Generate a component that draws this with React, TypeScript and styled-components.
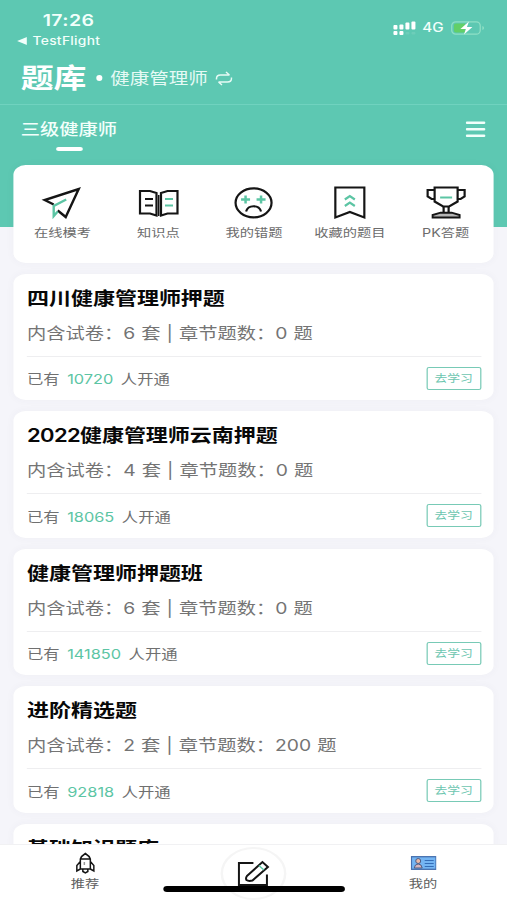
import React from "react";
import styled, { createGlobalStyle } from "styled-components";

const STRETCH = 507 / 416;
const green = "#5dc8b2";
const mint = "#5cc5a4";

const GlobalStyle = createGlobalStyle`
  * { box-sizing: border-box; }
  html, body { margin: 0; padding: 0; overflow: hidden; background: #f5f5fa; }
  body { font-family: Inter, "Noto Sans CJK SC", sans-serif; }
`;

const Frame = styled.div`
  width: 507px;
  height: 900px;
  overflow: hidden;
`;

const Screen = styled.div`
  width: 416px;
  height: 900px;
  display: flex;
  flex-direction: column;
  overflow: hidden;
  white-space: nowrap;
  transform: scaleX(${STRETCH});
  transform-origin: 0 0;
  background: linear-gradient(${green} 0 227px, #f5f5fa 227px);
`;

const StatusBar = styled.header`
  height: 52px;
  padding: 10px 18.5px 0 14px;
  display: flex;
  justify-content: space-between;
  color: #f2fffb;
`;

const Clock = styled.div`
  padding-left: 21px;
  font-size: 16px;
  font-weight: 600;
  line-height: 20px;
  letter-spacing: 0.35px;
`;

const BackLink = styled.div`
  display: flex;
  align-items: center;
  gap: 4.5px;
  padding-top: 1px;
  font-size: 11.3px;
  font-weight: 500;
  line-height: 20px;
  letter-spacing: 0.25px;
`;

const Signals = styled.div`
  height: 35px;
  display: flex;
  align-items: center;
  font-size: 12.5px;
  font-weight: 500;
`;

const Network = styled.span`
  margin: 0 5.5px 0 5px;
`;

const TitleBar = styled.div`
  height: 53px;
  padding: 0 17px;
  display: flex;
  align-items: center;
  color: #fff;
  border-bottom: 1px solid #70d2bf;
`;

const Title = styled.h1`
  margin: 0;
  padding-top: 1px;
  font-size: 27px;
  font-weight: 700;
  line-height: 40px;
`;

const Dot = styled.i`
  width: 5px;
  height: 6px;
  margin: 0 7px 0 7.5px;
  border-radius: 50%;
  background: #fff;
`;

const Subject = styled.span`
  margin: -3px 5px 0 0;
  font-size: 16px;
  color: #e6faf5;
`;

const Tabs = styled.nav`
  height: 60px;
  padding: 0 17.5px 0 17px;
  display: flex;
  justify-content: space-between;
`;

const Tab = styled.div`
  display: flex;
  flex-direction: column;
  align-items: center;
  padding-top: 13px;
  font-size: 15.8px;
  font-weight: 500;
  line-height: 24px;
  color: #f2fffb;
  &::after {
    content: "";
    width: 22px;
    height: 4px;
    margin-top: 5px;
    border-radius: 2px;
    background: #fff;
  }
`;

const MenuButton = styled.div`
  padding-top: 16px;
`;

const Panel = styled.section`
  margin: 0 11px 0 11px;
  background: #fff;
  border-radius: 10px;
  box-shadow: 0 0 8px rgba(80, 80, 110, 0.04);
`;

const Shortcuts = styled(Panel)`
  height: 97.5px;
  flex: none;
  display: grid;
  grid-template-columns: repeat(5, 1fr);
  justify-items: center;
  padding: 21px 0 0 1px;
`;

const Shortcut = styled.div`
  display: flex;
  flex-direction: column;
  align-items: center;
  font-size: 11.7px;
  line-height: 24px;
  color: #6c6c6c;
`;

const List = styled.main`
  flex: 1;
  min-height: 0;
  overflow: hidden;
  padding-top: 11px;
  display: flex;
  flex-direction: column;
  gap: 11px;
`;

const Course = styled(Panel)`
  flex: none;
  height: 126.5px;
  padding: 12px 10px 0 11.2px;
`;

const CourseTitle = styled.h2`
  margin: 0;
  font-size: 18.05px;
  font-weight: 600;
  line-height: 26px;
  color: #080808;
`;

const TitleYear = styled.span`
  letter-spacing: -0.55px;
`;

const CourseMeta = styled.p`
  margin: 0;
  padding-top: 9px;
  height: 45px;
  font-size: 15.8px;
  line-height: 26px;
  word-spacing: 0.5px;
  color: #747474;
  border-bottom: 1px solid #eeeef0;
`;

const CourseFoot = styled.div`
  height: 43px;
  display: flex;
  align-items: center;
  justify-content: space-between;
  font-size: 13.4px;
  color: #707070;
`;

const Count = styled.span`
  margin: 0 6.2px;
  color: ${mint};
`;

const StudyButton = styled.button`
  width: 45.5px;
  height: 23px;
  padding: 0;
  border: 1.5px solid #78cab6;
  border-radius: 2px;
  background: #fff;
  font: 400 10.5px/21px Inter, "Noto Sans CJK SC", sans-serif;
  color: #6cc6b0;
`;

const BottomBar = styled.footer`
  height: 56px;
  flex: none;
  position: relative;
  display: grid;
  grid-template-columns: repeat(3, 1fr);
  justify-items: center;
  background: #fff;
  border-top: 1px solid #f1f1f3;
`;

const NavItem = styled.div`
  display: flex;
  flex-direction: column;
  align-items: center;
  padding: 7px 0 0 1px;
  font-size: 11.7px;
  line-height: 21px;
  color: #606060;
`;

const Compose = styled.div`
  width: 54px;
  height: 53px;
  margin-top: 2px;
  padding-bottom: 2px;
  display: flex;
  justify-content: center;
  align-items: center;
  border: 2px solid #f5f5f5;
  border-radius: 50%;
  background: #fff;
`;

const HomeIndicator = styled.div`
  position: absolute;
  left: 134px;
  bottom: 8px;
  width: 149px;
  height: 6px;
  border-radius: 3px;
  background: #000;
`;

const NavIcon = styled.div`
  height: 22px;
  display: flex;
  align-items: center;
`;

/* Drawing units follow the stretched screen, so strokes stay even. */
const Icon = ({ w, h, children }: { w: number; h: number; children: React.ReactNode }) => (
  <svg
    width={w / STRETCH}
    height={h}
    viewBox={`0 0 ${w} ${h}`}
    preserveAspectRatio="none"
    fill="none"
    stroke="#151515"
    strokeWidth="2.2"
  >
    {children}
  </svg>
);

const shortcuts = [
  {
    label: "在线模考",
    icon: (
      <Icon w={44} h={35}>
        <path d="M13.500 18.500 4.500 14 38.500 3 25.500 31 17.500 24.500" strokeWidth="2.400" />
        <path d="M26 13.500 13.500 20V30l4-4.500" stroke={mint} strokeWidth="2.400" />
      </Icon>
    ),
  },
  {
    label: "知识点",
    icon: (
      <Icon w={44} h={35}>
        <path d="M3.500 5h10l6.500 2v22.500l-6.500-2h-10zM41 5H31l-6.500 2v22.500l6.500-2h10z" />
        <path d="M22.200 9v21" strokeWidth="1.600" />
        <path d="M8.500 13h8M8.500 19.500h8" />
        <path d="M28.500 13h8M28.500 19.500h8" stroke={mint} />
      </Icon>
    ),
  },
  {
    label: "我的错题",
    icon: (
      <Icon w={44} h={35}>
        <ellipse cx="22" cy="16.800" rx="18" ry="14.500" />
        <path d="M14.500 25.500c2-7 13-7 15 0" />
        <path d="M9.500 13.500h9M14 9.500v8M25 13.500h9M29.500 9.500v8" stroke={mint} strokeWidth="2.500" />
      </Icon>
    ),
  },
  {
    label: "收藏的题目",
    icon: (
      <Icon w={44} h={35}>
        <path d="M7.500 1.500h29v30L22 26 7.500 31.500z" />
        <path d="m17 13.500 5-3.500 5 3.500M17 20l5-3.500 5 3.500" stroke={mint} />
      </Icon>
    ),
  },
  {
    label: "PK答题",
    icon: (
      <Icon w={44} h={35}>
        <path d="M10.500 1.500h23v14l-8.500 5h-6l-8.500-5zM10.500 4H3.500v6.500l4 2.500h3M33.500 4h7v6.500l-4 2.500h-3" />
        <path d="M19.500 20.500v6.500M24.500 20.500v6.500" />
        <path d="M8.500 31.500V29l8-2.300h11l8 2.300v2.500z" fill="#b5b5b5" strokeWidth="1.900" />
        <path d="M16 11.500h12" stroke={mint} />
      </Icon>
    ),
  },
];

type CourseInfo = {
  year?: string;
  title: string;
  papers?: number;
  questions?: number;
  users?: number;
};

const courses: CourseInfo[] = [
  { title: "四川健康管理师押题", papers: 6, questions: 0, users: 10720 },
  { year: "2022", title: "健康管理师云南押题", papers: 4, questions: 0, users: 18065 },
  { title: "健康管理师押题班", papers: 6, questions: 0, users: 141850 },
  { title: "进阶精选题", papers: 2, questions: 200, users: 92818 },
  { title: "基础知识题库" },
];

export default function App() {
  return (
    <Frame>
      <GlobalStyle />
      <Screen>
        <StatusBar>
          <div>
            <Clock>17:26</Clock>
            <BackLink>
              <Icon w={10} h={8}>
                <path d="M0 4 10 0v8z" fill="#f2fffb" stroke="none" />
              </Icon>
              TestFlight
            </BackLink>
          </div>
          <Signals>
            <Icon w={24} h={14}>
              <g fill="#fff" stroke="none">
                <rect x="1" y="4" width="4" height="4.500" rx="1" />
                <rect x="7" y="3.500" width="4" height="5" rx="1" />
                <rect x="13" y="1.500" width="4" height="7" rx="1" />
                <rect x="19" y="0.500" width="4" height="8" rx="1" />
                <rect x="1" y="10" width="4" height="4" rx="1" />
                <rect x="7" y="10" width="4" height="4" rx="1" />
                <rect x="13" y="11" width="4" height="2.500" rx="1" opacity="0.1" />
                <rect x="19" y="11" width="4" height="2.500" rx="1" opacity="0.1" />
              </g>
            </Icon>
            <Network>4G</Network>
            <Icon w={34} h={14}>
              <rect x="0.800" y="0.800" width="28.500" height="12.400" rx="4" stroke="#8fdfc6" strokeWidth="1.300" />
              <path d="M5 2.500h9v9H5a2 2 0 0 1-2-2v-5a2 2 0 0 1 2-2z" fill="#62cf68" stroke="none" />
              <path d="M31.500 5v4c2-.8 2-3.200 0-4z" fill="#95e3c9" stroke="none" />
              <path d="M18 .5 9.500 8h5.500l-2 5.500L21.500 6H16z" fill="#fff" stroke="none" />
            </Icon>
          </Signals>
        </StatusBar>
        <TitleBar>
          <Title>题库</Title>
          <Dot />
          <Subject>健康管理师</Subject>
          <Icon w={19} h={15}>
            <path d="M2 8.500V7.500Q2 4 6 4h9M11.500 1 15 4M17 6.500v1q0 3.500-4 3.500H4M7.500 14 4 11" stroke="#e6faf5" strokeWidth="1.500" />
          </Icon>
        </TitleBar>
        <Tabs>
          <Tab>三级健康师</Tab>
          <MenuButton>
            <Icon w={20} h={17}>
              <path d="M1.500 1.800h17M1.500 8.300h17M1.500 14.800h17" stroke="#f2fffb" strokeWidth="2.600" strokeLinecap="round" />
            </Icon>
          </MenuButton>
        </Tabs>
        <Shortcuts>
          {shortcuts.map((s) => (
            <Shortcut key={s.label}>
              {s.icon}
              {s.label}
            </Shortcut>
          ))}
        </Shortcuts>
        <List>
          {courses.map((c) => (
            <Course key={c.title}>
              <CourseTitle>
                {c.year && <TitleYear>{c.year}</TitleYear>}
                {c.title}
              </CourseTitle>
              {c.users !== undefined && (
                <>
                  <CourseMeta>
                    内含试卷：{c.papers} 套 | 章节题数：{c.questions} 题
                  </CourseMeta>
                  <CourseFoot>
                    <div>
                      已有<Count>{c.users}</Count>人开通
                    </div>
                    <StudyButton>去学习</StudyButton>
                  </CourseFoot>
                </>
              )}
            </Course>
          ))}
        </List>
        <BottomBar>
          <NavItem>
            <NavIcon>
              <Icon w={22} h={22}>
                <g strokeWidth="1.500">
                  <path d="M6 17V7q1-3 5-5.500Q15 4 16 7v10zM6 9.500l-3.500 4V19L6 17M16 9.500l3.500 4V19L16 17M8.500 17v2.500L11 21l2.500-1.500V17M6 7h10" />
                  <path d="M10 10v3" stroke="#999" />
                </g>
              </Icon>
            </NavIcon>
            推荐
          </NavItem>
          <Compose>
            <Icon w={34} h={28}>
              <path d="M17 4H2.500v22h28V15.500" strokeWidth="2" />
              <path d="M10.500 17 26 3l5.500 5L16 21.500q-4 1-6-.5-1-1.800.5-4z" strokeWidth="2" />
              <path d="m22.500 6.500 5 4.500" stroke={mint} strokeWidth="1.500" />
            </Icon>
          </Compose>
          <NavItem>
            <NavIcon>
              <Icon w={26} h={14}>
                <rect x="0.700" y="0.700" width="24.600" height="12.600" fill="#74b5f3" stroke="#466fae" strokeWidth="1.300" />
                <circle cx="7.500" cy="5" r="2.500" fill="#e9b8a7" stroke="#4c5b83" strokeWidth="1" />
                <path d="M3.500 12q.5-4 4-4t4 4z" fill="#d6b5bd" stroke="#4c5b83" strokeWidth="1" />
                <path d="M14 4.500h9M14 7.500h9M14 10.500h9" stroke="#356eb8" strokeWidth="1.100" />
              </Icon>
            </NavIcon>
            我的
          </NavItem>
          <HomeIndicator />
        </BottomBar>
      </Screen>
    </Frame>
  );
}
